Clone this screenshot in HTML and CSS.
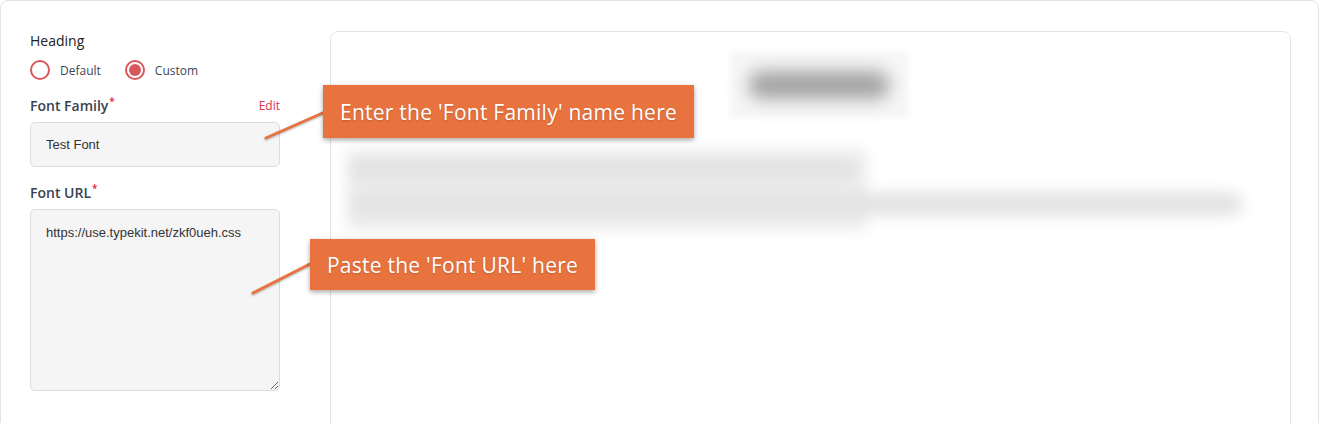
FILE: index.html
```html
<!DOCTYPE html>
<html lang="en">
<head>
  <meta charset="UTF-8">
  <title>Custom Heading Font</title>
  <link rel="stylesheet" href="styles.css">
</head>
<body>
  <div class="card">
    <div class="settings">
      <div class="section-title">Heading</div>
      <div class="radio-row">
        <label class="radio"><span class="dot"></span>Default</label>
        <label class="radio checked"><span class="dot"></span>Custom</label>
      </div>

      <div class="field-head">
        <span class="field-label">Font Family<sup>*</sup></span>
        <a class="edit-link" href="#">Edit</a>
      </div>
      <input class="text-input" type="text" value="Test Font">

      <div class="field-head">
        <span class="field-label">Font URL<sup>*</sup></span>
      </div>
      <textarea class="text-area">https://use.typekit.net/zkf0ueh.css</textarea>
    </div>

    <div class="preview">
      <div class="blur-title"><div class="blob"></div></div>
      <div class="blur-text">
        <div class="line line-a"></div>
        <div class="line line-b"></div>
        <div class="line line-c"></div>
      </div>
    </div>

    <!-- annotation overlay -->
    <svg class="pointers" width="1320" height="423">
      <line x1="265" y1="137" x2="324" y2="111"></line>
      <line x1="252" y1="292" x2="311" y2="262"></line>
    </svg>
    <div class="callout callout-family">Enter the 'Font Family' name here</div>
    <div class="callout callout-url">Paste the 'Font URL' here</div>
  </div>
</body>
</html>
```

FILE: styles.css
```css
body {
  margin: 0;
  background: #fff;
  font-family: "Open Sans", "Noto Sans", sans-serif;
  color: #333;
  overflow: hidden;
}
.card {
  position: relative;
  display: flex;
  gap: 50px;
  height: 440px;
  margin-right: 1px;
  padding: 30px 27px 0 29px;
  border: 1px solid #e4e4e4;
  border-radius: 8px;
  overflow: hidden;
}
.settings {
  width: 250px;
  flex-shrink: 0;
}
.section-title {
  font-size: 14px;
  line-height: 20px;
  color: #222;
}
.radio-row {
  display: flex;
  gap: 24px;
  margin-top: 9px;
  height: 20px;
}
.radio {
  display: flex;
  align-items: center;
  gap: 10px;
  font-size: 12px;
  color: #3c4656;
}
.dot {
  width: 16px;
  height: 16px;
  border: 2px solid #d9575b;
  border-radius: 50%;
  position: relative;
}
.checked .dot::after {
  content: "";
  position: absolute;
  top: 2px;
  left: 2px;
  width: 12px;
  height: 12px;
  border-radius: 50%;
  background: #d9575b;
}
.field-head {
  display: flex;
  justify-content: space-between;
  align-items: center;
  margin-top: 15px;
  height: 20px;
}
.field-label {
  font-size: 14px;
  font-weight: 600;
  color: #3a4250;
}
.field-label sup {
  color: #e0203c;
  font-size: 10px;
  line-height: 0;
  margin-left: 1px;
}
.edit-link {
  font-size: 12px;
  color: #e0314b;
  text-decoration: none;
}
.text-input,
.text-area {
  display: block;
  width: 250px;
  box-sizing: border-box;
  margin-top: 7px;
  padding: 0 15px;
  background: #f5f5f5;
  border: 1px solid #dcdcdc;
  border-radius: 5px;
  font-family: "Liberation Sans", Arial, sans-serif;
  font-size: 13px;
  color: #333;
}
.text-input {
  height: 45px;
}
.text-area {
  height: 182px;
  padding-top: 15px;
  resize: both;
}
.preview {
  flex: 1;
  height: 430px;
  border: 1px solid #e4e4e4;
  border-radius: 8px;
  padding: 20px 0 0 16px;
}
.blur-title {
  width: 178px;
  height: 66px;
  margin: 0 auto;
  background: #f6f6f6;
  filter: blur(3px);
  display: flex;
  align-items: center;
  justify-content: center;
}
.blob {
  width: 140px;
  height: 28px;
  background: #a4a4a4;
  border-radius: 12px;
  filter: blur(8px);
}
.blur-text {
  position: relative;
  margin-top: 32px;
  height: 80px;
  width: 900px;
  filter: blur(7px);
}
.line {
  position: absolute;
  left: 0;
}
.line-a {
  top: 0;
  width: 520px;
  height: 80px;
  background: #ececec;
}
.line-b {
  top: 10px;
  width: 510px;
  height: 18px;
  background: #e2e2e2;
  border-radius: 8px;
}
.line-c {
  top: 42px;
  width: 895px;
  height: 24px;
  background: #e4e4e4;
  border-radius: 10px;
}
.pointers {
  position: absolute;
  top: 0;
  left: 0;
  pointer-events: none;
  filter: drop-shadow(0 1px 1px rgba(0,0,0,0.3));
}
.pointers line {
  stroke: #e9733f;
  stroke-width: 3;
  stroke-linecap: round;
}
.callout {
  position: absolute;
  display: flex;
  align-items: center;
  justify-content: center;
  background: #e9733f;
  color: #fff;
  font-family: "Open Sans", sans-serif;
  font-size: 21px;
  letter-spacing: 0.25px;
  box-shadow: 0 2px 5px rgba(0,0,0,0.35);
  text-shadow: 0 1px 2px rgba(0,0,0,0.2);
}
.callout-family {
  left: 322px;
  top: 84px;
  width: 371px;
  height: 53px;
}
.callout-url {
  left: 309px;
  top: 238px;
  width: 285px;
  height: 51px;
}
```
